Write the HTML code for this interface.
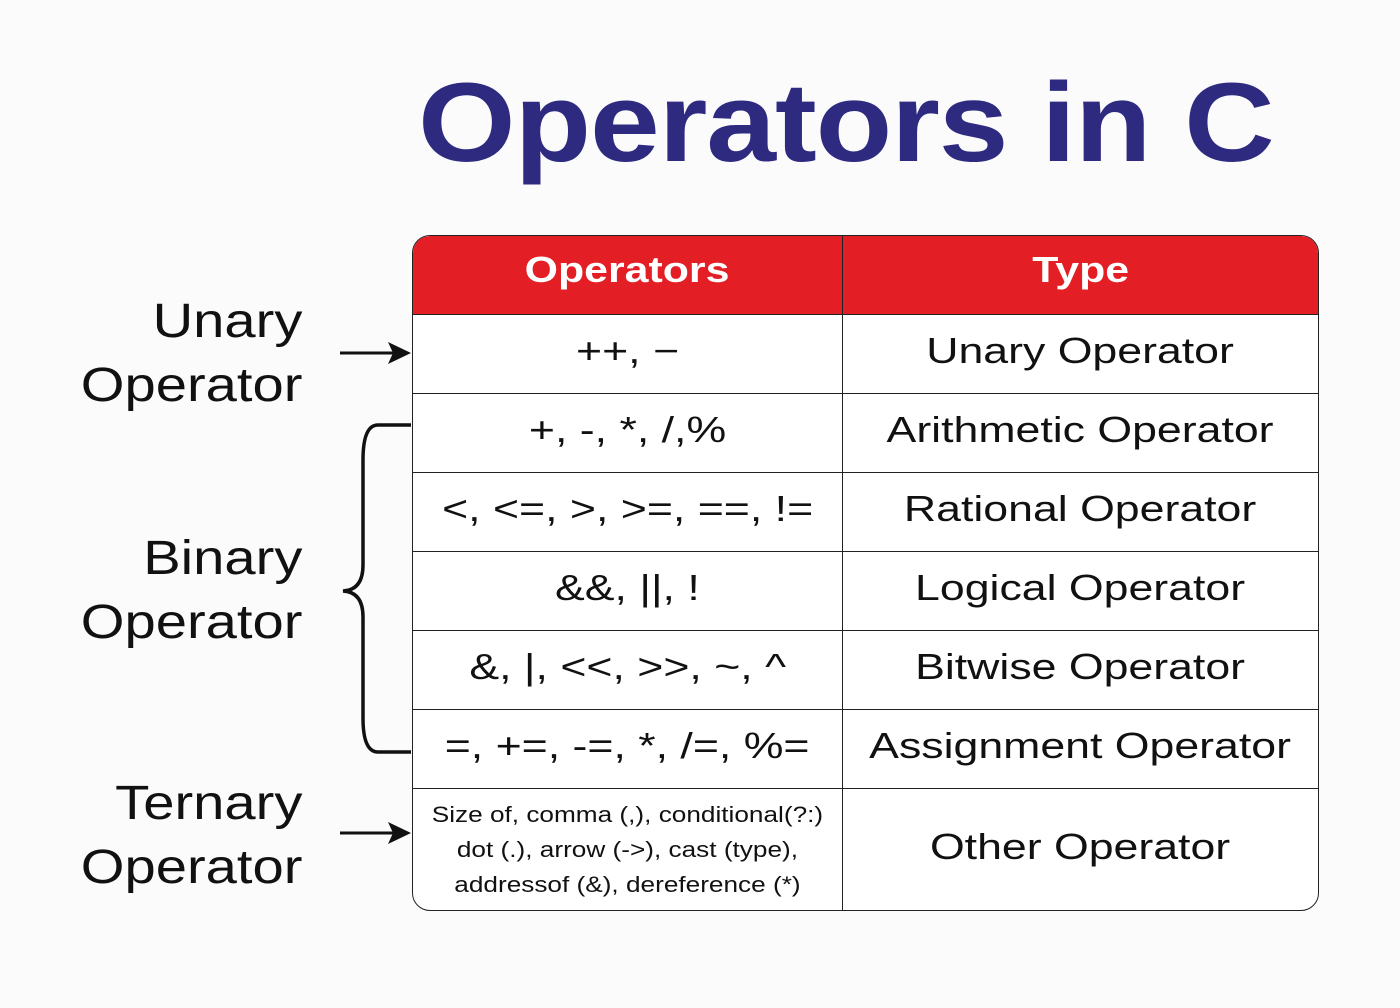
<!DOCTYPE html>
<html><head><style>
body{margin:0;width:1400px;height:1008px;background:#fbfbfc;position:relative;overflow:hidden;font-family:"Liberation Sans",sans-serif;}
.title{position:absolute;left:418px;top:58px;font-size:112px;font-weight:bold;color:#2e2a80;letter-spacing:-1px;white-space:nowrap;transform:scaleX(1.12);transform-origin:left top;}
.lbl{position:absolute;right:1098px;font-size:48px;color:#111;text-align:right;line-height:64px;transform:scaleX(1.17);transform-origin:right top;}
table{position:absolute;left:412px;top:235px;width:907px;border-collapse:separate;border-spacing:0;border:1.5px solid #222;border-radius:18px;overflow:hidden;background:#fff;}
td,th{border-right:1.5px solid #222;border-bottom:1.5px solid #222;text-align:center;padding:0;color:#111;font-size:36px;}
td:last-child,th:last-child{border-right:none;}
tr:last-child td{border-bottom:none;}
th{background:#e31e24;color:#fff;font-size:36px;height:78px;font-weight:bold;}
td{height:78px;}
td.s{font-size:22px;line-height:35px;height:121px;}
span{display:inline-block;transform:scaleX(1.24);white-space:nowrap;position:relative;top:-3px;}
th span,td.s span{transform:scaleX(1.19);}
th span{top:-5px;}
td.s span{top:0;}
</style></head><body>
<div class="title">Operators in C</div>
<div class="lbl" style="top:290px">Unary<br>Operator</div>
<div class="lbl" style="top:527px">Binary<br>Operator</div>
<div class="lbl" style="top:772px">Ternary<br>Operator</div>
<svg width="1400" height="1008" style="position:absolute;left:0;top:0">
<g stroke="#111" stroke-width="3" fill="none">
<path d="M340 353 H404"/><path d="M340 833 H404"/>
<path d="M411 425 H378 Q363 425 363 460 V565 Q363 590 343 591 Q363 592 363 617 V718 Q363 752 378 752 H411" stroke-width="3.5"/>
</g>
<path d="M411 353 L388 342 L393 353 L388 364Z" fill="#111"/>
<path d="M411 833 L388 822 L393 833 L388 844Z" fill="#111"/>
</svg>
<table>
<tr><th style="width:429px"><span>Operators</span></th><th><span>Type</span></th></tr>
<tr><td><span>++, −</span></td><td><span>Unary Operator</span></td></tr>
<tr><td><span>+, -, *, /,%</span></td><td><span>Arithmetic Operator</span></td></tr>
<tr><td><span>&lt;, &lt;=, &gt;, &gt;=, ==, !=</span></td><td><span>Rational Operator</span></td></tr>
<tr><td><span>&amp;&amp;, ||, !</span></td><td><span>Logical Operator</span></td></tr>
<tr><td><span>&amp;, |, &lt;&lt;, &gt;&gt;, ~, ^</span></td><td><span>Bitwise Operator</span></td></tr>
<tr><td><span>=, +=, -=, *, /=, %=</span></td><td><span>Assignment Operator</span></td></tr>
<tr><td class="s"><span>Size of, comma (,), conditional(?:)<br>dot (.), arrow (-&gt;), cast (type),<br>addressof (&amp;), dereference (*)</span></td><td><span>Other Operator</span></td></tr>
</table>
</body></html>
